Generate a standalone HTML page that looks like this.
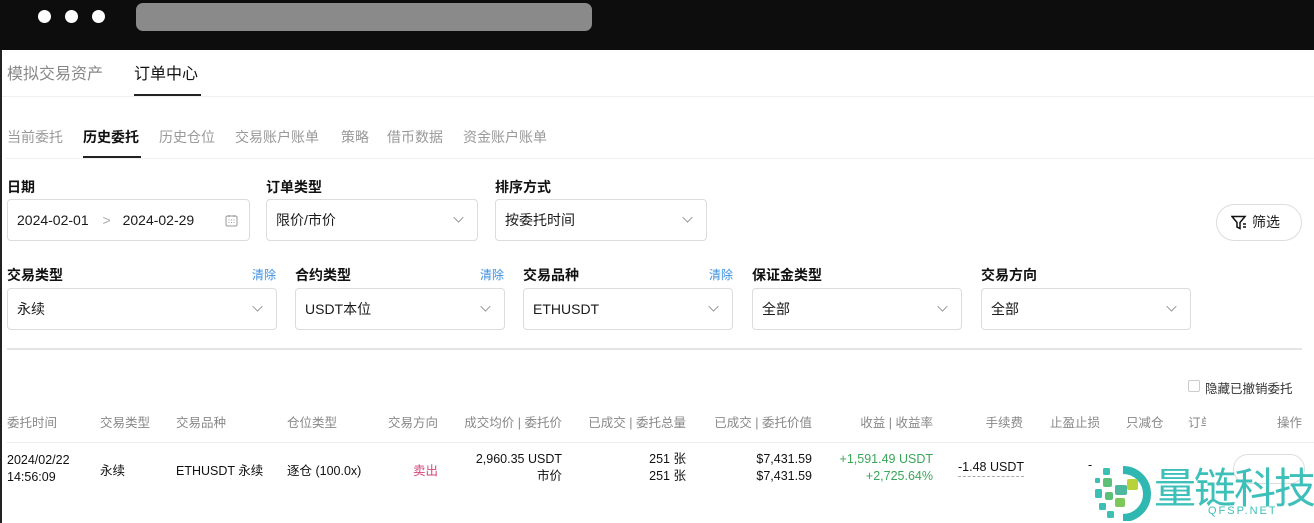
<!DOCTYPE html>
<html><head><meta charset="utf-8"><style>
*{margin:0;padding:0;box-sizing:border-box}
body{width:1314px;height:523px;overflow:hidden;background:#fff;font-family:"Liberation Sans","Noto Sans CJK SC",sans-serif;color:#1a1a1a;position:relative}
.a{position:absolute;white-space:nowrap}
.top{left:0;top:0;width:1314px;height:50px;background:#0d0d0d}
.dot{width:13px;height:13px;border-radius:50%;background:#fff;top:10px}
.box{position:absolute;border:1px solid #dcdcdc;border-radius:4px;height:42px;font-size:14px;padding-left:9px;line-height:40px;color:#1a1a1a}
.chev{position:absolute;right:14px;top:13px;width:9px;height:9px;border-right:1.3px solid #888;border-bottom:1.3px solid #888;transform:rotate(45deg) scale(.8)}
.lbl{font-size:14px;font-weight:bold;color:#111}
.clr{font-size:12px;color:#3a8fe0}
.th{font-size:12.5px;color:#888;top:412px}
.td{font-size:12.5px;color:#111}
.hl{position:absolute;height:1px;background:#e8e8e8}
</style></head><body>
<div class="a top"></div>
<div class="a dot" style="left:38px"></div><div class="a dot" style="left:65px"></div><div class="a dot" style="left:92px"></div>
<div class="a" style="left:136px;top:3px;width:456px;height:28px;background:#8a8a8a;border-radius:7px"></div>
<div class="a" style="left:0;top:50px;width:2px;height:473px;background:#222"></div>

<div class="a" style="left:7px;top:60px;font-size:16px;color:#888">模拟交易资产</div>
<div class="a" style="left:134px;top:60px;font-size:16px;color:#111">订单中心</div>
<div class="a" style="left:134px;top:94px;width:67px;height:2px;background:#222"></div>
<div class="hl" style="left:2px;top:96px;width:1312px;background:#f0f0f0"></div>

<div class="a" style="left:7px;top:127px;font-size:14px;color:#999">当前委托</div>
<div class="a" style="left:83px;top:127px;font-size:14px;color:#111;font-weight:bold">历史委托</div>
<div class="a" style="left:159px;top:127px;font-size:14px;color:#999">历史仓位</div>
<div class="a" style="left:235px;top:127px;font-size:14px;color:#999">交易账户账单</div>
<div class="a" style="left:341px;top:127px;font-size:14px;color:#999">策略</div>
<div class="a" style="left:387px;top:127px;font-size:14px;color:#999">借币数据</div>
<div class="a" style="left:463px;top:127px;font-size:14px;color:#999">资金账户账单</div>
<div class="a" style="left:83px;top:156px;width:58px;height:2px;background:#222"></div>
<div class="hl" style="left:6px;top:158px;width:1308px;background:#f0f0f0"></div>

<div class="a lbl" style="left:7px;top:177px">日期</div>
<div class="a lbl" style="left:266px;top:177px">订单类型</div>
<div class="a lbl" style="left:495px;top:177px">排序方式</div>
<div class="box" style="left:7px;top:199px;width:243px">2024-02-01 <span style="color:#aaa;margin:0 8px 0 10px">&gt;</span> 2024-02-29
<svg style="position:absolute;right:11px;top:14px" width="13" height="13" viewBox="0 0 13 13" fill="none" stroke="#999" stroke-width="1"><rect x="1" y="2" width="11" height="10" rx="1.5"/><path d="M4 1v2M9 1v2M3.5 6h1M6 6h1M8.5 6h1M3.5 8.5h1M6 8.5h1M8.5 8.5h1"/></svg></div>
<div class="box" style="left:266px;top:199px;width:212px">限价/市价<i class="chev"></i></div>
<div class="box" style="left:495px;top:199px;width:212px">按委托时间<i class="chev"></i></div>
<div class="a" style="left:1216px;top:204px;width:86px;height:37px;border:1px solid #ddd;border-radius:19px;font-size:14px;line-height:35px;padding-left:35px">筛选
<svg style="position:absolute;left:14px;top:10px" width="17" height="16" viewBox="0 0 17 16" fill="none" stroke="#111" stroke-width="1.5"><path d="M1 1.5h13L9 7.5v6l-3-1.5V7.5z"/><path d="M12 9h3M12 12h3" /></svg></div>

<div class="a lbl" style="left:7px;top:265px">交易类型</div><div class="a clr" style="left:252px;top:266px">清除</div>
<div class="a lbl" style="left:295px;top:265px">合约类型</div><div class="a clr" style="left:480px;top:266px">清除</div>
<div class="a lbl" style="left:523px;top:265px">交易品种</div><div class="a clr" style="left:709px;top:266px">清除</div>
<div class="a lbl" style="left:752px;top:265px">保证金类型</div>
<div class="a lbl" style="left:981px;top:265px">交易方向</div>
<div class="box" style="left:7px;top:288px;width:270px">永续<i class="chev"></i></div>
<div class="box" style="left:295px;top:288px;width:210px">USDT本位<i class="chev"></i></div>
<div class="box" style="left:523px;top:288px;width:210px">ETHUSDT<i class="chev"></i></div>
<div class="box" style="left:752px;top:288px;width:210px">全部<i class="chev"></i></div>
<div class="box" style="left:981px;top:288px;width:210px">全部<i class="chev"></i></div>
<div class="hl" style="left:7px;top:348px;width:1295px;height:2px;background:#e4e4e4"></div>

<div class="a" style="left:1188px;top:380px;width:12px;height:12px;border:1px solid #ccc;border-radius:2px"></div>
<div class="a" style="left:1205px;top:378px;font-size:12.5px;color:#333">隐藏已撤销委托</div>

<div class="a th" style="left:7px">委托时间</div>
<div class="a th" style="left:100px">交易类型</div>
<div class="a th" style="left:176px">交易品种</div>
<div class="a th" style="left:287px">仓位类型</div>
<div class="a th" style="left:388px">交易方向</div>
<div class="a th" style="right:752px">成交均价 | 委托价</div>
<div class="a th" style="right:628px">已成交 | 委托总量</div>
<div class="a th" style="right:502px">已成交 | 委托价值</div>
<div class="a th" style="right:381px">收益 | 收益率</div>
<div class="a th" style="right:291px">手续费</div>
<div class="a th" style="left:1050px">止盈止损</div>
<div class="a th" style="left:1126px">只减仓</div>
<div class="a th" style="left:1188px">订单</div>
<div class="a" style="left:1206px;top:400px;width:106px;height:123px;background:#fff"></div>
<div class="a th" style="right:12px">操作</div>
<div class="hl" style="left:7px;top:442px;width:1307px;background:#ececec"></div>

<div class="a td" style="left:7px;top:452px;line-height:17px">2024/02/22<br>14:56:09</div>
<div class="a td" style="left:100px;top:460px">永续</div>
<div class="a td" style="left:176px;top:460px">ETHUSDT 永续</div>
<div class="a td" style="left:287px;top:460px">逐仓 (100.0x)</div>
<div class="a td" style="left:413px;top:460px;color:#d6477a">卖出</div>
<div class="a td" style="right:752px;top:451px;text-align:right;line-height:17px">2,960.35 USDT<br>市价</div>
<div class="a td" style="right:628px;top:451px;text-align:right;line-height:17px">251 张<br>251 张</div>
<div class="a td" style="right:502px;top:451px;text-align:right;line-height:17px">$7,431.59<br>$7,431.59</div>
<div class="a td" style="right:381px;top:451px;text-align:right;line-height:17px;color:#3aa65a">+1,591.49 USDT<br>+2,725.64%</div>
<div class="a td" style="left:958px;top:460px;border-bottom:1px dashed #aaa;padding-bottom:2px">-1.48 USDT</div>
<div class="a td" style="left:1088px;top:458px">-</div>
<div class="a" style="left:1233px;top:454px;width:72px;height:30px;border:1px solid #ddd;border-radius:15px;background:#fff"></div>

<svg class="a" style="left:1093px;top:465px" width="60" height="56" viewBox="0 0 60 56">
<path d="M30 5 A24 24 0 0 1 30 53" fill="none" stroke="#2fb7b2" stroke-width="8"/>
<rect x="10" y="3" width="7" height="7" rx="1.5" fill="#3cc0b6"/>
<rect x="2" y="13" width="5" height="5" rx="1" fill="#3cc0b6"/>
<rect x="10" y="13" width="9" height="9" rx="2" fill="#5cc07a"/>
<rect x="22" y="20" width="12" height="10" rx="2" fill="#4cb8a0"/>
<rect x="34" y="14" width="11" height="11" rx="2" fill="#b8d23a"/>
<rect x="2" y="24" width="7" height="9" rx="1.5" fill="#3cc0b6"/>
<rect x="12" y="27" width="8" height="8" rx="2" fill="#5cc07a"/>
<rect x="22" y="33" width="10" height="9" rx="2" fill="#7cc85a"/>
<rect x="6" y="38" width="7" height="7" rx="1.5" fill="#3cc0b6"/>
<rect x="14" y="46" width="7" height="7" rx="1.5" fill="#3cc0b6"/>
</svg>
<div class="a" style="left:1154px;top:460px;font-size:42px;color:#3ec0ba;letter-spacing:-2px;font-family:'Noto Sans CJK SC',sans-serif;line-height:52px">量链科技</div>
<div class="a" style="left:1208px;top:505px;font-size:11px;color:#3ec0ba;letter-spacing:2px">QFSP.NET</div>
</body></html>
